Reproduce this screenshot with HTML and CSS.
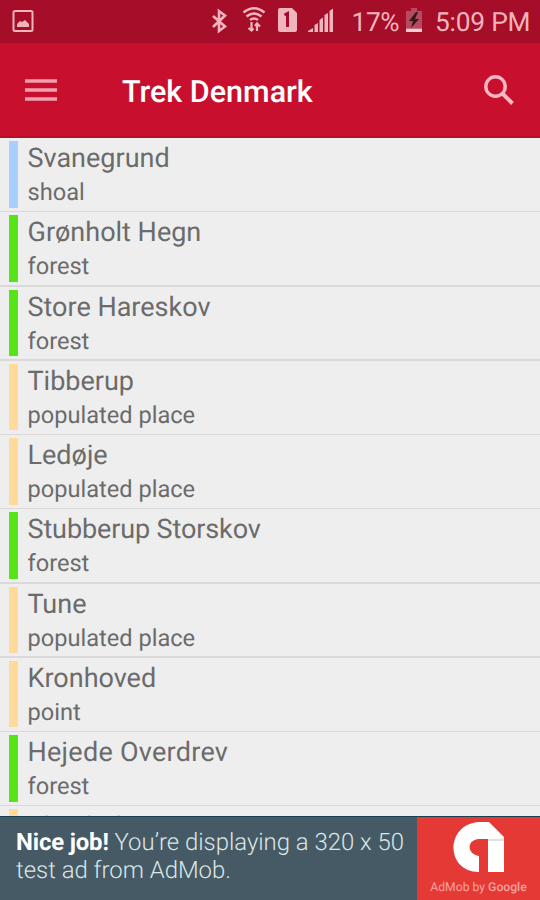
FILE: index.html
```
<!DOCTYPE html>
<html lang="en">
<head>
<meta charset="utf-8">
<title>Trek Denmark</title>
<link rel="stylesheet" href="styles.css">
</head>
<body>
<div class="screen">
  <header class="status">
    <svg class="status-icons" width="345" height="43" viewBox="0 0 345 43">
      <g fill="none" stroke="#f0b4bd" stroke-width="2">
        <rect x="13.500" y="11" width="19" height="20" rx="1.500"/>
        <path d="M213 16l12 10.500-6 4.500V11l6 4.500L213 27" stroke-width="2.600"/>
        <path d="M243.500 12.500q10.500-8.500 21 0M246.500 16.500q7.500-6 15 0M250 20q4-3 8 0" stroke-width="2.600"/>
        <path d="M251.500 22v8M257 31v-7M248.500 28l3 2.500 2-2M255 26l2-2.500 3 3" stroke-width="2.200"/>
      </g>
      <g fill="#f0b4bd">
        <path d="M17 27v-3l3-3 2 1 3-2 4 4v3z"/>
        <path d="M280 8h12l5 5v17q0 2-2 2h-15q-2 0-2-2V10q0-2 2-2z"/>
        <path d="M308 32v-1l5-3v4zM314.500 32v-7l3.500-2v9zM319.500 32V20l3.500-2.500V32zM324.500 32V15l3.500-2v19zM329.500 32V11l3.500-2.500V32z"/>
      </g>
      <path d="M284.500 15l3-1.500V27" fill="none" stroke="#a30c27" stroke-width="3"/>
    </svg>
    <span class="percent">17%</span>
    <svg class="battery" width="18" height="43" viewBox="0 0 18 43">
      <path d="M1 11h5V8h6v3h5v17H1z" fill="#b54b5e"/>
      <path d="M1 28.500h16V32H1z" fill="#f7ccd2"/>
      <path d="M11 12l-7 9h4l-2 7 8-9h-4l3-7z" fill="#35161b"/>
    </svg>
    <span class="clock">5:09 PM</span>
  </header>
  <nav class="toolbar">
    <svg class="menu" width="32" height="24" viewBox="0 0 32 24"><path d="M0 3h32M0 12h32M0 21h32" stroke="#f4a0ae" stroke-width="3.600"/></svg>
    <h1>Trek Denmark</h1>
    <svg class="search" width="32" height="32" viewBox="0 0 32 32" fill="none" stroke="#fab8c1" stroke-width="3.400"><circle cx="12.500" cy="12.500" r="9.700"/><path d="M19.500 19.500l10 10" stroke-width="4"/></svg>
  </nav>
  <main class="list">
    <div class="row shoal"><i></i><div><h2>Svanegrund</h2><p>shoal</p></div></div>
    <div class="row forest"><i></i><div><h2>Grønholt Hegn</h2><p>forest</p></div></div>
    <div class="row forest"><i></i><div><h2>Store Hareskov</h2><p>forest</p></div></div>
    <div class="row place"><i></i><div><h2>Tibberup</h2><p>populated place</p></div></div>
    <div class="row place"><i></i><div><h2>Ledøje</h2><p>populated place</p></div></div>
    <div class="row forest"><i></i><div><h2 class="snug">Stubberup Storskov</h2><p>forest</p></div></div>
    <div class="row place"><i></i><div><h2>Tune</h2><p>populated place</p></div></div>
    <div class="row place"><i></i><div><h2>Kronhoved</h2><p>point</p></div></div>
    <div class="row forest"><i></i><div><h2 class="loose">Hejede Overdrev</h2><p>forest</p></div></div>
    <div class="row place last"><i></i><div><h2>Skovled</h2></div></div>
  </main>
  <footer class="ad">
    <p class="ad-text"><b>Nice job!</b> You’re displaying a 320 x 50<br>test ad from AdMob.</p>
    <div class="admob">
      <svg width="52" height="52" viewBox="0 0 52 52">
        <path d="M26 0L36 0 51 15V50H35V17H26C13 18 14 32 26 34V50C-8 50-8 2 26 0z" fill="#fff"/>
        <path d="M35 17h12l4-2v4H35z" fill="#e2e2e2"/>
      </svg>
      <span>AdMob by <b>Google</b></span>
    </div>
  </footer>
</div>
</body>
</html>
```
FILE: styles.css
```
* { box-sizing: border-box; }
body, h1, h2, p { margin: 0; }
body { font-family: Roboto, sans-serif; background: #eee; text-rendering: geometricPrecision; }
.screen { width: 540px; height: 900px; display: flex; flex-direction: column; overflow: hidden; }
.status { height: 43px; flex: none; background: #a50d28; display: flex; color: #f0b4bd; font-size: 26.3px; line-height: 46px; white-space: nowrap; }
.status-icons { flex: none; }
.percent { width: 60px; padding-left: 6.5px; letter-spacing: -0.4px; }
.battery { flex: none; }
.clock { padding-left: 12px; letter-spacing: -0.2px; }
.toolbar { height: 94.5px; flex: none; background: #c8102e; display: flex; align-items: center; border-bottom: 2px solid #b90d26; padding: 2px 25px 0; }
.toolbar h1 { margin: 5px 0 0 65px; flex: 1; font-size: 30.5px; line-height: 36px; font-weight: 500; color: #fff; }
.list { flex: 1; min-height: 0; overflow: hidden; color: #6b6b6b; }
.row { height: 74.25px; display: flex; padding: 3.5px 0 3px 9px; position: relative; }
.row::after { content: ""; position: absolute; left: 0; right: 0; bottom: -0.5px; height: 1.5px; background: #d9d9d9; }
.row i { width: 9px; height: 66.5px; margin-right: 9.5px; }
.row h2 { font-size: 27px; line-height: 34px; font-weight: 400; white-space: nowrap; }
.row h2.snug { letter-spacing: -0.12px; }
.row h2.loose { letter-spacing: 0.27px; }
.row p { font-size: 23.6px; line-height: 35.5px; }
.last h2 { padding-top: 1px; }
.shoal i { background: #a8cdff; }
.forest i { background: #55e416; }
.place i { background: #ffda9a; }
.ad { height: 84px; flex: none; display: flex; background: #455a64; border-top: 1px solid #173f50; }
.ad-text { width: 417px; flex: none; padding: 11px 0 0 16px; font-size: 23.9px; line-height: 28px; font-weight: 300; color: #dce5e8; white-space: nowrap; }
.ad-text b { font-weight: 700; color: #fff; letter-spacing: -0.15px; }
.admob { flex: 1; background: #e53935; display: flex; flex-direction: column; align-items: center; padding-top: 5px; }
.admob svg { flex: none; }
.admob span { margin-top: 5px; font-size: 12.2px; line-height: 16px; color: #f7a39e; white-space: nowrap; }
.admob b { font-weight: 500; }
```
